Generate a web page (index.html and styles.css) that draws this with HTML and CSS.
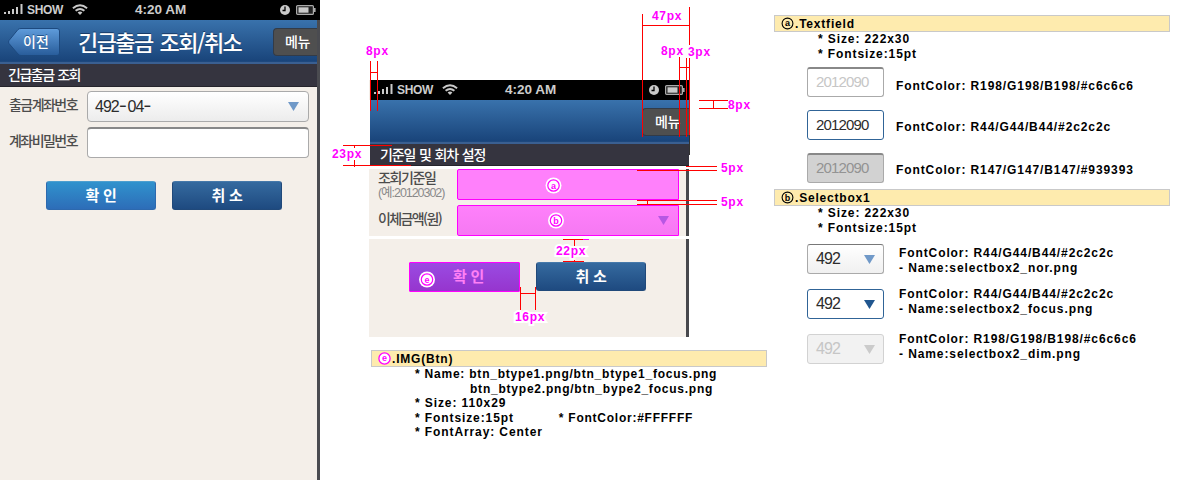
FILE: index.html
```html
<!DOCTYPE html>
<html lang="ko">
<head>
<meta charset="utf-8">
<title>긴급출금 조회/취소</title>
<link rel="stylesheet" href="styles.css">
</head>
<body>
<svg class="defs" width="0" height="0">
  <defs>
    <symbol id="signal" viewBox="0 0 20 11"><path d="M0 8h2v2H0zM4 7h2v3H4zM8 5h2v5H8zM12 3h2v7h-2zM16.500 0h2v10h-2z" fill="#c9c9c9"/></symbol>
    <symbol id="wifi" viewBox="0 0 16 11"><g fill="none" stroke="#c9c9c9" stroke-width="1.900"><path d="M.9 4.200Q8-1.900 15.100 4.200"/><path d="M3.600 6.800Q8 3 12.400 6.800"/></g><path d="M5.600 8.500Q8 6.700 10.400 8.500L8 11z" fill="#c9c9c9"/></symbol>
    <symbol id="clock" viewBox="0 0 10 10"><circle cx="5" cy="5" r="5" fill="#c9c9c9"/><path d="M5 1.500V5.500H2.500" fill="none" stroke="#000" stroke-width="1.300"/></symbol>
    <symbol id="battery" viewBox="0 0 20 10"><rect x=".6" y=".6" width="16.800" height="8.800" rx="1" fill="#222" stroke="#aaa" stroke-width="1.200"/><path d="M2.500 2.300h10v5.400h-10z" fill="#c9c9c9"/><path d="M18 3h1.600v4H18z" fill="#aaa"/></symbol>
  </defs>
</svg>
<main class="sheet">
  <section class="phone">
    <div class="status">
      <svg class="signal"><use href="#signal"/></svg><span class="carrier">SHOW</span><svg class="wifi"><use href="#wifi"/></svg>
      <span class="time">4:20 AM</span>
      <svg class="clock"><use href="#clock"/></svg><svg class="battery"><use href="#battery"/></svg>
    </div>
    <div class="screen">
      <header class="nav">
        <div class="back">
          <svg class="back-shape" viewBox="0 0 52 28"><defs><linearGradient id="bk" x2="0" y2="1"><stop stop-color="#5f9cdb"/><stop offset="1" stop-color="#285c9a"/></linearGradient></defs><path d="M10 1.500Q11 .5 13 .5H49Q51.500 .5 51.500 3V25Q51.500 27.500 49 27.500H13Q11 27.500 10 26L1 15.500Q0 14 1 12.500Z" fill="url(#bk)" stroke="#1d4a80"/></svg>
          <span class="back-label">이전</span>
        </div>
        <h1 class="title">긴급출금 조회/취소</h1>
        <div class="menu">메뉴</div>
      </header>
      <h2 class="section-title">긴급출금 조회</h2>
      <div class="form">
        <label class="label">출금계좌번호</label>
        <div class="field select"><span>492<i>-</i>04<i>-</i></span><svg class="arrow" viewBox="0 0 11 9"><path d="M0 0h11L5.500 9z" fill="#7099c8"/></svg></div>
        <label class="label">계좌비밀번호</label>
        <div class="field inset"></div>
      </div>
      <div class="buttons"><div class="btn light">확 인</div><div class="btn">취 소</div></div>
    </div>
  </section>

  <section class="spec">
    <div class="mock">
      <div class="status">
        <svg class="signal"><use href="#signal"/></svg><span class="carrier">SHOW</span><svg class="wifi"><use href="#wifi"/></svg>
        <span class="time">4:20 AM</span>
        <svg class="clock"><use href="#clock"/></svg><svg class="battery"><use href="#battery"/></svg>
      </div>
      <div class="mock-head">
        <header class="nav"><div class="menu">메뉴</div></header>
        <h2 class="section-title wide">기준일 및 회차 설정</h2>
      </div>
      <div class="mock-form">
        <div class="label small">조회기준일<br><em>(예:20120302)</em></div>
        <div class="area"></div>
        <div class="label amount">이체금액(원)</div>
        <div class="area shade"><svg class="arrow" viewBox="0 0 11 9"><path d="M0 0h11L5.500 9z" fill="#b757e3"/></svg></div>
      </div>
      <div class="mock-buttons"><div class="btn marked">확 인</div><div class="btn">취 소</div></div>
    </div>
    <div class="note note-e">
      <h3 class="bar"><svg class="mark" viewBox="0 0 13 13"><circle cx="6.500" cy="6.500" r="5.600" fill="#fff" stroke="#f0f" stroke-width="1.300"/><text x="6.500" y="9.400" text-anchor="middle" fill="#f0f">e</text></svg>.IMG(Btn)</h3>
      <p class="line names">* Name: btn_btype1.png/btn_btype1_focus.png</p>
      <p class="line names second">btn_btype2.png/btn_bype2_focus.png</p>
      <p class="line">* Size: 110x29</p>
      <p class="line split"><span>* Fontsize:15pt</span><span class="color">* FontColor:#FFFFFF</span></p>
      <p class="line">* FontArray: Center</p>
    </div>
  </section>

  <section class="guide">
    <h3 class="bar"><svg class="mark" viewBox="0 0 13 13"><circle cx="6.500" cy="6.500" r="5.400" fill="none" stroke="#000" stroke-width="1.100"/><text x="6.500" y="9.300" text-anchor="middle">a</text></svg>.Textfield</h3>
    <p class="line">* Size: 222x30</p>
    <p class="line">* Fontsize:15pt</p>
    <div class="samples fields">
      <div class="sample"><div class="box inset dim">2012090</div><p class="low">FontColor: R198/G198/B198/#c6c6c6</p></div>
      <div class="sample"><div class="box focus">2012090</div><p>FontColor: R44/G44/B44/#2c2c2c</p></div>
      <div class="sample"><div class="box inset off">2012090</div><p>FontColor: R147/G147/B147/#939393</p></div>
    </div>
    <h3 class="bar"><svg class="mark" viewBox="0 0 13 13"><circle cx="6.500" cy="6.500" r="5.400" fill="none" stroke="#000" stroke-width="1.100"/><text x="6.500" y="9.600" text-anchor="middle">b</text></svg>.Selectbox1</h3>
    <p class="line">* Size: 222x30</p>
    <p class="line">* Fontsize:15pt</p>
    <div class="samples selects">
      <div class="sample"><div class="box select nor">492<svg class="arrow" viewBox="0 0 11 9"><path d="M0 0h11L5.500 9z" fill="#7099c8"/></svg></div><p class="first">FontColor: R44/G44/B44/#2c2c2c<br>- Name:selectbox2_nor.png</p></div>
      <div class="sample"><div class="box select focus">492<svg class="arrow" viewBox="0 0 11 9"><path d="M0 0h11L5.500 9z" fill="#20568f"/></svg></div><p class="raised">FontColor: R44/G44/B44/#2c2c2c<br>- Name:selectbox2_focus.png</p></div>
      <div class="sample"><div class="box select disabled">492<svg class="arrow" viewBox="0 0 11 9"><path d="M0 0h11L5.500 9z" fill="#cbcbcb"/></svg></div><p class="raised">FontColor: R198/G198/B198/#c6c6c6<br>- Name:selectbox2_dim.png</p></div>
    </div>
  </section>
</main>

<!-- dimension lines and callouts -->
<svg class="dims" viewBox="0 0 1200 480">
  <path class="red" d="M370.500 61v50M377.500 61v50M370 72.500h8M642.500 14v123M689.500 7v128M642 25.500h48M679.500 57v80M686.500 57v80M679 67.500h11M699 100.500h29M699 108.500h29M713.500 100v9M343 145.500h49M343 165.500h68M354.500 145v22M686 166.500h31M637 170.500h80M637 200.500h80M637 204.500h80M647.500 200v5M574.500 239v23M563 239.500h20M563 261.500h21M520.500 287v23M535.500 287v23M520 293.500h16"/>
  <path class="pink" d="M583 239.500h6"/>
  <path d="M689.500 135v20" stroke="#333" fill="none"/>
  <g class="plates"><rect x="684" y="45" width="28" height="13"/><rect x="328" y="148" width="34" height="12"/></g>
  <g class="dim-text">
    <text x="366" y="55">8px</text><text x="652" y="20">47px</text><text x="661" y="55">8px</text><text x="688" y="56">3px</text><text x="728" y="109">8px</text><text x="332" y="158">23px</text><text x="721" y="172">5px</text><text x="721" y="206">5px</text><text class="halo" x="556" y="255">22px</text><text class="halo" x="515" y="321">16px</text>
  </g>
  <g class="callouts">
    <circle cx="553.500" cy="185.500" r="8"/><circle class="ring" cx="553.500" cy="185.500" r="5.700"/><text x="553.500" y="188.500">a</text>
    <circle cx="556" cy="220.500" r="8"/><circle class="ring" cx="556" cy="220.500" r="5.700"/><text x="556" y="223.800">b</text>
    <circle cx="427" cy="279.500" r="8"/><circle class="ring" cx="427" cy="279.500" r="5.700"/><text x="427" y="282.500">e</text>
  </g>
</svg>
</body>
</html>
```
FILE: styles.css
```css
* { box-sizing: border-box; }
body { margin: 0; width: 1200px; height: 480px; overflow: hidden; background: #fff; font-family: "Liberation Sans", "Noto Sans CJK KR", sans-serif; }
h1, h2, h3, p { margin: 0; }
.defs { position: absolute; }
.sheet { display: grid; grid-template-columns: 320px 454px 396px; height: 480px; }

.phone { display: flex; flex-direction: column; height: 480px; background: #4a4b50; }
.status { display: flex; align-items: center; height: 20px; flex: none; background: #000; color: #cdcdcd; font-weight: bold; padding: 0 4px 1px 4px; }
.signal { width: 20px; height: 11px; }
.carrier { font-size: 12px; letter-spacing: -.3px; margin-left: 3px; width: 36px; }
.wifi { width: 16px; height: 11px; margin-left: 9px; }
.time { font-size: 13.500px; margin-left: 47px; width: 52px; white-space: nowrap; }
.clock { width: 10px; height: 10px; margin-left: auto; }
.battery { width: 20px; height: 10px; margin-left: 6px; }
.screen { flex: 1; width: 317px; background: #f4efe9; }
.nav { display: flex; align-items: center; height: 44px; padding-left: 8px; background: linear-gradient(#3972ac, #19447a 94%, #3a5f91 96%, #3a5f91); color: #fff; font-family: "Noto Sans CJK KR", sans-serif; }
.back { display: grid; width: 52px; height: 28px; }
.back > * { grid-area: 1 / 1; }
.back-shape { width: 52px; height: 28px; }
.back-label { font-size: 14px; font-weight: 500; line-height: 26px; padding-left: 15px; text-shadow: 0 -1px 0 #24558d; }
.title { margin-left: 18px; width: 170px; font-size: 22px; font-weight: 500; line-height: 40px; letter-spacing: -1.600px; word-spacing: 2.500px; white-space: nowrap; padding-bottom: 2px; text-shadow: 0 -1px 0 #173b68; }
.menu { margin-left: auto; width: 44px; height: 28px; border: 1px solid #333b47; border-right: 0; border-radius: 4px 0 0 4px; background: #4f4f4f; font-size: 14px; font-weight: 500; line-height: 25px; padding-left: 11px; letter-spacing: -.4px; }
.section-title { height: 23px; background: #35343f; border-bottom: 1px solid #25242b; color: #fff; font: 500 14px/21px "Noto Sans CJK KR", sans-serif; letter-spacing: -1.450px; word-spacing: 1px; padding-left: 8px; white-space: nowrap; }
.form { display: grid; grid-template-columns: 70px 222px; gap: 5px 8px; padding: 4px 0 0 9px; }
.label { color: #4c4c4c; font: 500 14px/26px "Noto Sans CJK KR", sans-serif; letter-spacing: -1.550px; white-space: nowrap; }
.field { height: 31px; border: 1px solid #aaa; border-radius: 4px; background: linear-gradient(#fff, #ececec); display: flex; align-items: center; justify-content: space-between; padding: 0 9px 0 7px; font-size: 16px; letter-spacing: -1px; color: #2c2c2c; }
.field i { font-style: normal; font-family: Inter, sans-serif; font-size: 18px; line-height: 10px; letter-spacing: .5px; }
.inset { border: 1px solid #aaa; border-top: 2px solid #888; background: #fff; }
.arrow { width: 11px; height: 9px; flex: none; }
.buttons { display: flex; gap: 16px; padding: 23px 0 0 46px; }
.btn { width: 110px; height: 29px; border-radius: 3px; border: 1px solid #20497a; border-top-color: #4679aa; background: linear-gradient(#356a9f, #1e4a80); color: #fff; font: 700 15px/26px "Noto Sans CJK KR", sans-serif; letter-spacing: -.3px; text-align: center; }
.btn.light { background: linear-gradient(#3092cd, #2d6db8); border-color: #2d69ae; border-top-color: #4e9fcf; }

.spec { padding: 80px 0 0 49px; }
.mock { width: 320px; height: 257px; background: linear-gradient(90deg, #f4efe9 317px, #47484d 317px); }
.mock .status { margin-left: 1px; }
.mock-head { width: 320px; padding-left: 1px; background: linear-gradient(90deg, #fff 1px, #47484d 1px); }
.mock .nav { width: 319px; height: 44px; padding-right: 0; background: linear-gradient(#3972ac, #19447a 94%, #3a5f91 96%, #3a5f91); }
.mock .menu { width: 47px; padding-left: 12px; }
.section-title.wide { width: 319px; height: 22px; padding-left: 10px; letter-spacing: -1.150px; word-spacing: 1px; }
.mock-form { display: grid; grid-template-columns: 79px 222px; grid-auto-rows: 31px; gap: 5px 0; padding-left: 9px; border-top: 3px solid #fff; border-bottom: 3px solid #fff; height: 73px; }
.label.small { line-height: 14px; padding-top: 1px; letter-spacing: -1.400px; }
.label em { display: inline-block; font: 400 12.500px/12px "Liberation Sans", "Noto Sans CJK KR", sans-serif; color: #898989; letter-spacing: -1.050px; }
.amount { letter-spacing: -1.600px; line-height: 26px; }
.area { border: 1px solid #f0f; background: #ff80fb; border-radius: 2px 0 0 2px; }
.area.shade { display: flex; align-items: center; justify-content: flex-end; padding-right: 9px; background: linear-gradient(#ff80fb, #f579f2); }
.mock-buttons { display: flex; gap: 16px; padding: 23px 0 0 40px; }
.btn.marked { width: 111px; height: 30px; border: 1px solid #f0f; background: linear-gradient(#9a4be2, #9635ce); color: #ff80f5; padding-left: 8px; border-radius: 1px; }

.bar { display: flex; align-items: center; width: 396px; height: 17px; border: 1px solid #c9c9c9; background: #feebae; padding-left: 6px; font-size: 12px; letter-spacing: .8px; }
.mark { width: 13px; height: 13px; margin-right: 1px; font: bold 9px "Liberation Sans", sans-serif; letter-spacing: 0; }
.note { padding: 13px 0 0 2px; }
.line, .sample p { font-weight: bold; font-size: 12px; line-height: 14.500px; letter-spacing: .9px; white-space: nowrap; color: #000; }
.line { padding-left: 44px; }
.line.names { letter-spacing: .78px; }
.note .second { padding-left: 99px; }
.split { display: flex; gap: 45px; }
.split .color { letter-spacing: .75px; }
.guide { padding-top: 15px; }
.samples { padding-left: 33px; display: flex; flex-direction: column; }
.fields { height: 128px; gap: 13px; padding-top: 6px; }
.sample { display: flex; align-items: center; height: 30px; gap: 12px; }
.fields p { padding-top: 4px; }
.fields p.low { padding-top: 8px; }
.box { width: 77px; height: 30px; border: 1px solid #aaa; border-radius: 3px; font-size: 15px; letter-spacing: -.85px; line-height: 28px; padding: 0 8px; color: #2c2c2c; }
.box.inset { border-top: 2px solid #888; line-height: 26px; }
.box.dim { color: #c6c6c6; }
.box.off { background: #d2d2d2; color: #939393; }
.box.focus { border-color: #306497; }
.box.select { display: flex; align-items: center; justify-content: space-between; background: linear-gradient(#fff, #f0f0f0); font-size: 16px; }
.box.select.focus { background: #fff; }
.box.nor { border-color: #777 #aaa #aaa; }
.box.select.disabled { background: #f2f2f2; color: #c6c6c6; border-color: #d2d2d2; }
.selects { padding-top: 9px; gap: 15px; }
.selects .sample { gap: 15px; }
.selects .first { padding-top: 3px; }
.selects .raised { padding-bottom: 5px; }

.dims { position: absolute; left: 0; top: 0; width: 1200px; height: 480px; }
.red { stroke: #f00; fill: none; }
.pink { stroke: #f0f; }
.plates { fill: #fff; }
.dim-text { font: bold 12px "Liberation Sans", sans-serif; letter-spacing: .7px; fill: #f0f; }
.halo { stroke: #fff; stroke-width: 4px; paint-order: stroke; }
.callouts { fill: #fff; }
.callouts .ring { stroke: #f0f; stroke-width: 1.200px; }
.callouts text { font: bold 9px "Liberation Sans", sans-serif; fill: #f0f; text-anchor: middle; }
```
